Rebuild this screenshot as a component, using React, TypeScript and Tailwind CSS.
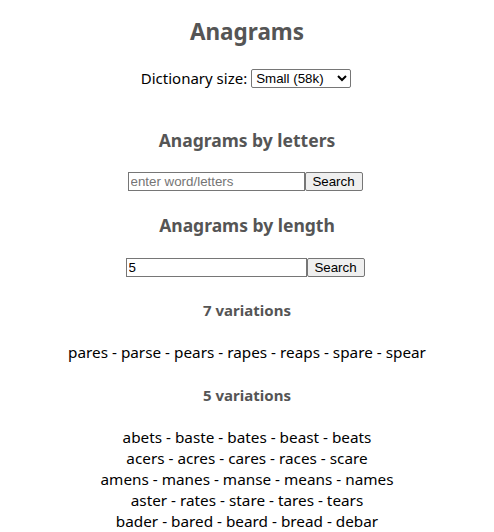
import React from 'react';

const sans = { fontFamily: '"Noto Sans", "Open Sans", sans-serif' };

const groups: { count: number; lines: string[][] }[] = [
  { count: 7, lines: [['pares', 'parse', 'pears', 'rapes', 'reaps', 'spare', 'spear']] },
  {
    count: 5,
    lines: [
      ['abets', 'baste', 'bates', 'beast', 'beats'],
      ['acers', 'acres', 'cares', 'races', 'scare'],
      ['amens', 'manes', 'manse', 'means', 'names'],
      ['aster', 'rates', 'stare', 'tares', 'tears'],
      ['bader', 'bared', 'beard', 'bread', 'debar'],
    ],
  },
];

const SearchRow: React.FC<{ value?: string; placeholder?: string; width: string }> = ({ value, placeholder, width }) => (
  <div className="flex items-center h-[19px] mr-[4px] font-['Arial','Liberation_Sans',sans-serif] text-[13.33px]">
    <input
      className={`${width} h-[19px] border border-[#767676] px-[2px] text-black placeholder:text-[#757575] outline-none`}
      defaultValue={value}
      placeholder={placeholder}
    />
    <button className="h-[19px] w-[58px] border border-[#767676] bg-[#efefef] rounded-[2px] text-black leading-none">
      Search
    </button>
  </div>
);

export default function App() {
  return (
    <div className="w-[494px] h-[532px] overflow-hidden bg-white flex flex-col items-center text-black" style={sans}>
      <h1 className="mt-[16px] text-[22.5px] leading-[32px] font-bold text-[#555]">Anagrams</h1>

      <div className="mt-[19px] flex items-center h-[22px] text-[15px] mr-[2px]">
        <span className="mr-[4px]">Dictionary size:</span>
        <select className="w-[100px] h-[19px] border border-[#767676] rounded-[2px] text-[13.33px] font-['Arial','Liberation_Sans',sans-serif] bg-white">
          <option>Small (58k)</option>
        </select>
      </div>

      <h2 className="mt-[38px] text-[17.5px] leading-[26px] font-bold text-[#555]">Anagrams by letters</h2>
      <div className="mt-[19px]">
        <SearchRow placeholder="enter word/letters" width="w-[177px]" />
      </div>

      <h2 className="mt-[21px] text-[17.5px] leading-[26px] font-bold text-[#555]">Anagrams by length</h2>
      <div className="mt-[20px]">
        <SearchRow value="5" width="w-[181px]" />
      </div>

      {groups.map((g, gi) => (
        <div key={g.count} className="flex flex-col items-center">
          <h3 className={`${gi === 0 ? 'mt-[23px]' : 'mt-[22px]'} text-[15px] leading-[20px] font-bold text-[#555]`}>
            {g.count} variations
          </h3>
          <div className="mt-[22px] text-[15.3px] leading-[21px] text-center">
            {g.lines.map((l, i) => (
              <div key={i} className="whitespace-nowrap">{l.join(' - ')}</div>
            ))}
          </div>
        </div>
      ))}
    </div>
  );
}
